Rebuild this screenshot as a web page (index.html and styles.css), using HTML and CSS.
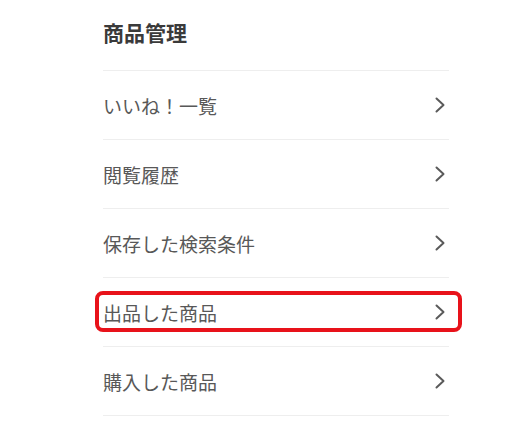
FILE: index.html
```html
<!DOCTYPE html>
<html lang="ja">
<head>
    <meta charset="UTF-8">
    <meta name="viewport" content="width=device-width, initial-scale=1.0">
    <title>商品管理</title>
    <link rel="stylesheet" href="styles.css">
</head>
<body>

    <div class="menu">
        <h2 class="menu-title">商品管理</h2>
        <ul class="menu-list">
            <li class="menu-item">
                <span>いいね！一覧</span>
                <svg class="chevron" width="10" height="16" viewBox="0 0 10 16"><polyline points="1.5,1.5 8.5,8 1.5,14.5"/></svg>
            </li>
            <li class="menu-item">
                <span>閲覧履歴</span>
                <svg class="chevron" width="10" height="16" viewBox="0 0 10 16"><polyline points="1.5,1.5 8.5,8 1.5,14.5"/></svg>
            </li>
            <li class="menu-item">
                <span>保存した検索条件</span>
                <svg class="chevron" width="10" height="16" viewBox="0 0 10 16"><polyline points="1.5,1.5 8.5,8 1.5,14.5"/></svg>
            </li>
            <li class="menu-item highlight">
                <span>出品した商品</span>
                <svg class="chevron" width="10" height="16" viewBox="0 0 10 16"><polyline points="1.5,1.5 8.5,8 1.5,14.5"/></svg>
            </li>
            <li class="menu-item">
                <span>購入した商品</span>
                <svg class="chevron" width="10" height="16" viewBox="0 0 10 16"><polyline points="1.5,1.5 8.5,8 1.5,14.5"/></svg>
            </li>
        </ul>
    </div>

</body>
</html>
```

FILE: styles.css
```css
body { font-family: "Noto Sans CJK JP", "Noto Sans", sans-serif; background-color: #ffffff; margin: 0; padding: 0; }
.menu { width: 346px; margin-left: 103px; }
.menu-title { margin: 0; height: 64px; padding-bottom: 6px; display: flex; align-items: center; font-size: 21px; font-weight: 700; color: #3a3a3a; border-bottom: 1px solid #eeeeee; }
.menu-list { list-style: none; margin: 0; padding: 0; }
.menu-item { position: relative; height: 68px; display: flex; justify-content: space-between; align-items: center; font-size: 19px; color: #585858; border-bottom: 1px solid #eeeeee; }
.chevron { margin-right: 4px; fill: none; stroke: #5a5a5a; stroke-width: 2; stroke-linecap: round; stroke-linejoin: round; }
.highlight::after { content: ""; position: absolute; left: -8px; right: -13px; top: 13px; height: 33px; border: 4px solid #e8121a; border-radius: 8px; }
```
